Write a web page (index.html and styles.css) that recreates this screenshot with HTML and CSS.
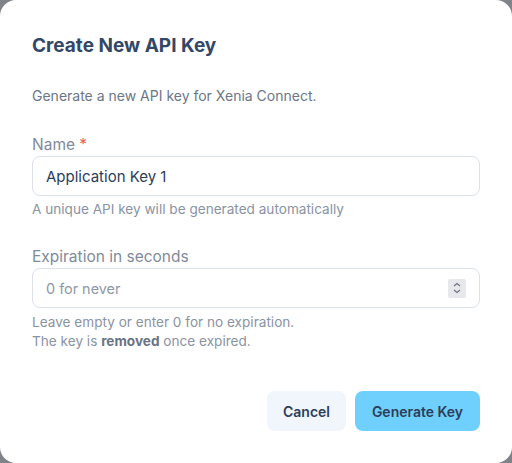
FILE: index.html
```html
<!DOCTYPE html>
<html>
<head>
<meta charset="utf-8">
<link rel="stylesheet" href="styles.css">
</head>
<body>
<div class="dialog">
  <h2 class="title">Create New API Key</h2>
  <p class="desc">Generate a new API key for Xenia Connect.</p>
  <div class="field">
    <label class="label">Name <span class="req">*</span></label>
    <div class="input"><span class="value">Application Key 1</span></div>
    <div class="help">A unique API key will be generated automatically</div>
  </div>
  <div class="field field2">
    <label class="label">Expiration in seconds</label>
    <div class="input"><span class="placeholder">0 for never</span>
      <span class="spin"><svg width="10" height="14" viewBox="0 0 10 14"><path d="M2 5 L5 2.5 L8 5" fill="none" stroke="#6b7280" stroke-width="1.2"/><path d="M2 9 L5 11.5 L8 9" fill="none" stroke="#6b7280" stroke-width="1.2"/></svg></span>
    </div>
    <div class="help">Leave empty or enter 0 for no expiration.<br>The key is <b>removed</b> once expired.</div>
  </div>
  <div class="actions">
    <button class="btn cancel">Cancel</button>
    <button class="btn primary">Generate Key</button>
  </div>
</div>
</body>
</html>
```
FILE: styles.css
```css
html, body { margin: 0; padding: 0; }
body {
  width: 512px; height: 463px;
  background: #808388;
  font-family: Inter, "Noto Sans", sans-serif;
  overflow: hidden;
}
.dialog {
  box-sizing: border-box;
  width: 512px; height: 463px;
  background: #fff;
  border-radius: 16px;
  padding: 34px 32px 0 32px;
  display: flex; flex-direction: column;
}
.title {
  margin: 0;
  font-size: 19px; font-weight: 700;
  color: #334766;
  line-height: 24px;
}
.desc {
  margin: 28px 0 0 0;
  font-size: 14px; color: #6b7688;
  line-height: 20px;
}
.field { margin-top: 29px; display: flex; flex-direction: column; }
.field2 { margin-top: 28px; }
.label { font-size: 15.5px; color: #808a9a; line-height: 20px; }
.req { color: #ef5b5b; }
.input {
  margin-top: 1px;
  box-sizing: border-box;
  height: 40px;
  border: 1px solid #dde2e8;
  border-radius: 8px;
  display: flex; align-items: center;
  padding: 0 12px 0 13px;
  font-size: 15px;
}
.value { color: #2c3e5a; }
.placeholder { color: #8f98a6; flex: 1; font-size: 14.4px; }
.spin {
  margin-left: auto;
  width: 18px; height: 19px;
  background: #e7e8ec;
  border-radius: 2px;
  display: flex; align-items: center; justify-content: center;
  margin-right: 1px;
}
.help { margin-top: 4px; font-size: 13.6px; color: #8a93a2; line-height: 19px; }
.field2 .help { margin-top: 5px; }
.help b { color: #6b7485; font-weight: 700; }
.actions {
  margin-top: 40px;
  display: flex; justify-content: flex-end; gap: 9px;
}
.btn {
  height: 40px; border: none; border-radius: 8px;
  font-family: Inter, "Noto Sans", sans-serif;
  font-size: 14px; font-weight: 600;
  color: #2c3e5a;
  padding: 0;
}
.cancel { background: #f1f5fc; width: 79px; }
.primary { background: #70d0fd; width: 125px; }
```
